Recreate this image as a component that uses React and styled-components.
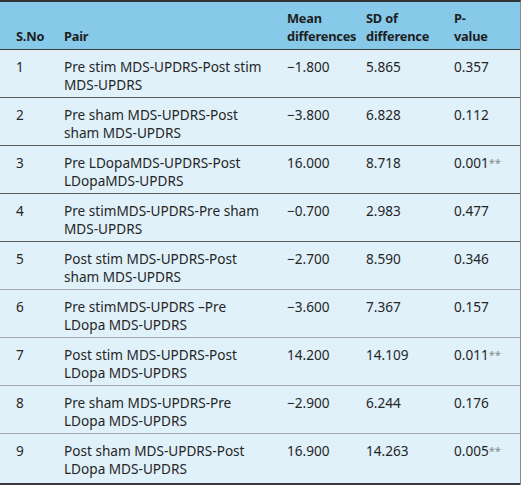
import React from "react";
import styled, { createGlobalStyle } from "styled-components";

const rows = [
  ["1", "Pre stim MDS-UPDRS-Post stim MDS-UPDRS", "\u22121.800", "5.865", "0.357", false, "dark"],
  ["2", "Pre sham MDS-UPDRS-Post sham MDS-UPDRS", "\u22123.800", "6.828", "0.112", false, "dark"],
  ["3", "Pre LDopaMDS-UPDRS-Post LDopaMDS-UPDRS", "16.000", "8.718", "0.001", true, "dark"],
  ["4", "Pre stimMDS-UPDRS-Pre sham MDS-UPDRS", "\u22120.700", "2.983", "0.477", false, "dark"],
  ["5", "Post stim MDS-UPDRS-Post sham MDS-UPDRS", "\u22122.700", "8.590", "0.346", false, "light"],
  ["6", "Pre stimMDS-UPDRS \u2013Pre LDopa MDS-UPDRS", "\u22123.600", "7.367", "0.157", false, "light"],
  ["7", "Post stim MDS-UPDRS-Post LDopa MDS-UPDRS", "14.200", "14.109", "0.011", true, "light"],
  ["8", "Pre sham MDS-UPDRS-Pre LDopa MDS-UPDRS", "\u22122.900", "6.244", "0.176", false, "light"],
  ["9", "Post sham MDS-UPDRS-Post LDopa MDS-UPDRS", "16.900", "14.263", "0.005", true, "last"],
];

const GlobalStyle = createGlobalStyle`
  body {
    margin: 0;
    background: #fff;
    font-family: "Noto Sans", "Open Sans", sans-serif;
  }
`;

const Table = styled.div`
  width: 521px;
  box-sizing: border-box;
  border-top: 2px solid #333;
  border-right: 1px solid #8c8c8c;
  background: #e0f1fa;
  font-size: 13.6px;
  line-height: 18px;
  color: #262626;
`;

const Row = styled.div`
  display: grid;
  grid-template-columns: 48px 223px 79px 88px 1fr;
  padding: ${(p) => (p.$head ? "7px 0 4px 16px" : "8px 0 3px 16px")};
  padding-bottom: ${(p) => (p.$tone === "last" ? "5px" : undefined)};
  background: ${(p) => (p.$head ? "#86c9e9" : "#e0f1fa")};
  align-items: ${(p) => (p.$head ? "end" : "start")};
  border-bottom: ${(p) =>
    p.$head || p.$tone === "last"
      ? "2px solid #3a3a3a"
      : p.$tone === "dark"
      ? "1px solid #5a5a5a"
      : "1px solid #a4a8ab"};
  border-bottom-width: ${(p) => (p.$head ? "1px" : undefined)};
`;

const HeadCell = styled.div`
  font-weight: 700;
  font-size: 12.8px;
  letter-spacing: -0.2px;
  color: #1e1e1e;
  padding-right: 2px;
  white-space: nowrap;
`;

const Cell = styled.div`
  padding-right: ${(p) => (p.$pair ? "18px" : "4px")};
  min-height: 36px;
`;

const Sig = styled.span`
  color: #8a8a8a;
  font-size: 11px;
  vertical-align: 1px;
`;

export default function App() {
  return (
    <>
      <GlobalStyle />
      <Table>
        <Row $head>
          <HeadCell>S.No</HeadCell>
          <HeadCell>Pair</HeadCell>
          <HeadCell>
            Mean
            <br />
            differences
          </HeadCell>
          <HeadCell>
            SD of
            <br />
            difference
          </HeadCell>
          <HeadCell>
            P-
            <br />
            value
          </HeadCell>
        </Row>
        {rows.map(([n, pair, mean, sd, p, sig, tone]) => (
          <Row key={n} $tone={tone}>
            <Cell>{n}</Cell>
            <Cell $pair>{pair}</Cell>
            <Cell>{mean}</Cell>
            <Cell>{sd}</Cell>
            <Cell>
              {p}
              {sig && <Sig>**</Sig>}
            </Cell>
          </Row>
        ))}
      </Table>
    </>
  );
}
